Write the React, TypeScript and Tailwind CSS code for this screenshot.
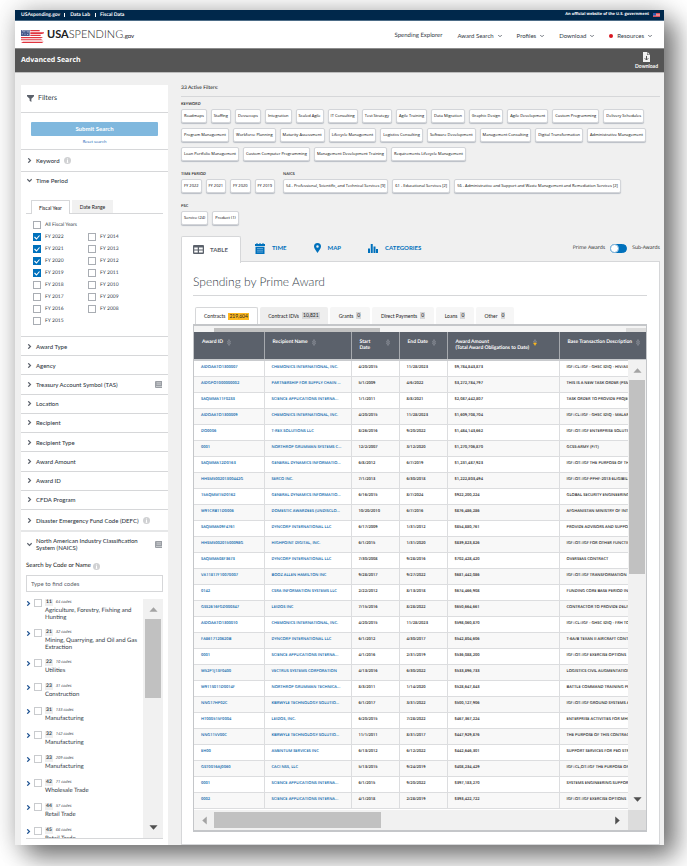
import React from "react";

const KEYWORD_ROWS = [
  ["Roadmaps", "Staffing", "Devsecops", "Integration", "Scaled Agile", "IT Consulting", "Test Strategy", "Agile Training", "Data Migration", "Graphic Design", "Agile Development", "Custom Programming", "Delivery Schedules"],
  ["Program Management", "Workforce Planning", "Maturity Assessment", "Lifecycle Management", "Logistics Consulting", "Software Development", "Management Consulting", "Digital Transformation", "Administrative Management"],
  ["Loan Portfolio Management", "Custom Computer Programming", "Management Development Training", "Requirements Lifecycle Management"],
];

const YEARS_LEFT = [2022, 2021, 2020, 2019, 2018, 2017, 2016, 2015];
const YEARS_RIGHT = [2014, 2013, 2012, 2011, 2010, 2009, 2008];

const SECTIONS = [
  { label: "Award Type" },
  { label: "Agency" },
  { label: "Treasury Account Symbol (TAS)", book: true },
  { label: "Location" },
  { label: "Recipient" },
  { label: "Recipient Type" },
  { label: "Award Amount" },
  { label: "Award ID" },
  { label: "CFDA Program" },
];

const NAICS = [
  { code: "11", count: 64, name: "Agriculture, Forestry, Fishing and Hunting", tall: true },
  { code: "21", count: 32, name: "Mining, Quarrying, and Oil and Gas Extraction", tall: true },
  { code: "22", count: 10, name: "Utilities" },
  { code: "23", count: 31, name: "Construction" },
  { code: "31", count: 133, name: "Manufacturing" },
  { code: "32", count: 142, name: "Manufacturing" },
  { code: "33", count: 209, name: "Manufacturing" },
  { code: "42", count: 71, name: "Wholesale Trade" },
  { code: "44", count: 57, name: "Retail Trade" },
  { code: "45", count: 66, name: "Retail Trade" },
];

const AWARD_TABS = [
  { label: "Contracts", count: "219,604", width: "w-[63px]" },
  { label: "Contract IDVs", count: "10,821", width: "w-[68px]" },
  { label: "Grants", count: "0", width: "w-[40px]" },
  { label: "Direct Payments", count: "0", width: "w-[62px]" },
  { label: "Loans", count: "0", width: "w-[38px]" },
  { label: "Other", count: "0", width: "w-[38px]" },
];

const ROWS = [
  ["AIDOAATO1300007", "CHEMONICS INTERNATIONAL, INC.", "4/20/2015", "11/28/2023", "$9,784,843,873", "IGF::CL::IGF - GHSC IDIQ - HIV/AIDS"],
  ["AIDGPO1000000002", "PARTNERSHIP FOR SUPPLY CHAIN ...", "5/1/2009", "4/6/2022", "$3,272,784,797", "THIS IS A NEW TASK ORDER (PSM)"],
  ["SAQMMA11F0233", "SCIENCE APPLICATIONS INTERNA...", "1/1/2011", "8/8/2021", "$2,087,442,807", "TASK ORDER TO PROVIDE PROJECT"],
  ["AIDOAATO1300009", "CHEMONICS INTERNATIONAL, INC.", "4/20/2015", "11/28/2023", "$1,609,708,704", "IGF::CL::IGF - GHSC IDIQ - MALARIA"],
  ["DO0006", "T-REX SOLUTIONS LLC", "8/26/2016", "9/20/2022", "$1,484,143,662", "IGF::OT::IGF ENTERPRISE SOLUTION"],
  ["0001", "NORTHROP GRUMMAN SYSTEMS C...", "12/2/2007", "3/12/2020", "$1,270,706,870", "GCSS-ARMY (P/T)"],
  ["SAQMMA12D0163", "GENERAL DYNAMICS INFORMATIO...", "6/8/2012", "6/7/2019", "$1,231,487,923", "IGF::OT::IGF THE PURPOSE OF THIS"],
  ["HHSM500201300442G", "SERCO INC.", "7/1/2013", "6/30/2018", "$1,222,803,494", "IGF::OT::IGF-PPHF-2013-ELIGIBILITY"],
  ["15AQMM15D0162", "GENERAL DYNAMICS INFORMATIO...", "6/16/2015", "8/7/2024", "$922,200,224", "GLOBAL SECURITY ENGINEERING"],
  ["W91CRB11D0006", "DOMESTIC AWARDEES (UNDISCLO...", "10/20/2010", "6/7/2016", "$876,486,286", "AFGHANISTAN MINISTRY OF INTERIOR"],
  ["SAQMMA09F4761", "DYNCORP INTERNATIONAL LLC", "6/17/2009", "1/31/2012", "$854,880,761", "PROVIDE ADVISORS AND SUPPORT"],
  ["HHSM500201500098G", "HIGHPOINT DIGITAL, INC.", "6/1/2015", "1/31/2020", "$839,823,826", "IGF::OT::IGF FOR OTHER FUNCTIONS"],
  ["SAQMMA08F3673", "DYNCORP INTERNATIONAL LLC", "7/30/2008", "9/28/2016", "$702,428,420", "OVERSEAS CONTRACT"],
  ["VA11817F10070007", "BOOZ ALLEN HAMILTON INC", "9/28/2017", "9/27/2022", "$681,442,086", "IGF::OT::IGF TRANSFORMATION"],
  ["0142", "CSRA INFORMATION SYSTEMS LLC", "2/22/2012", "8/13/2018", "$674,466,908", "FUNDING CORE BASE PERIOD INCR"],
  ["GSS2616FGD000347", "LEIDOS INC", "7/15/2016", "8/28/2022", "$650,664,661", "CONTRACTOR TO PROVIDE DELIVERY"],
  ["AIDOAATO1300010", "CHEMONICS INTERNATIONAL, INC.", "4/20/2015", "11/28/2023", "$598,060,870", "IGF::CL::IGF - GHSC IDIQ - FRH TO"],
  ["FA8617120620B", "DYNCORP INTERNATIONAL LLC", "6/1/2012", "4/30/2017", "$542,804,606", "T-6A/B TEXAN II AIRCRAFT CONTR"],
  ["0001", "SCIENCE APPLICATIONS INTERNA...", "4/1/2016", "2/31/2019", "$536,088,200", "IGF::OT::IGF EXERCISE OPTIONS"],
  ["W52P1J13F0400", "VECTRUS SYSTEMS CORPORATION", "4/13/2016", "6/30/2022", "$533,896,733", "LOGISTICS CIVIL AUGMENTATION"],
  ["W911S011D0014F", "NORTHROP GRUMMAN TECHNICA...", "8/3/2011", "1/14/2020", "$528,647,843", "BATTLE COMMAND TRAINING PROG"],
  ["NNG17HP02C", "KBRWYLE TECHNOLOGY SOLUTIO...", "6/1/2017", "3/31/2022", "$500,127,906", "IGF::OT::IGF GROUND SYSTEMS AND"],
  ["HT000515F0004", "LEIDOS, INC.", "6/20/2015", "7/28/2022", "$467,367,224", "ENTERPRISE ACTIVITIES FOR MHS"],
  ["NNG11VV00C", "KBRWYLE TECHNOLOGY SOLUTIO...", "11/1/2011", "8/31/2017", "$447,929,876", "THE PURPOSE OF THIS CONTRACT"],
  ["EH00", "AMENTUM SERVICES INC", "6/13/2012", "6/12/2022", "$442,646,301", "SUPPORT SERVICES FOR PEO STRI"],
  ["GST0016AJ0060", "CACI NSS, LLC", "5/13/2015", "9/24/2019", "$408,234,429", "IGF::CL,OT::IGF THE PURPOSE OF"],
  ["0001", "SCIENCE APPLICATIONS INTERNA...", "6/1/2015", "9/20/2022", "$397,183,270", "SYSTEMS ENGINEERING SUPPORT"],
  ["0002", "SCIENCE APPLICATIONS INTERNA...", "4/1/2018", "2/28/2019", "$393,422,722", "IGF::OT::IGF EXERCISE OPTIONS"],
];

const COLUMNS = ["Award ID", "Recipient Name", "Start Date", "End Date", "Award Amount (Total Award Obligations to Date)", "Base Transaction Description"];

function Chevron({ down = false, className = "h-[5px] w-[5px] text-[#5b616b]" }: { down?: boolean; className?: string }) {
  return (
    <svg viewBox="0 0 8 8" className={`shrink-0 ${className}`} fill="none" stroke="currentColor" strokeWidth="2" aria-hidden="true">
      {down ? <path d="M0.5 2l3.5 3.5L7.500 2" /> : <path d="M2 0.5L5.500 4L2 7.500" />}
    </svg>
  );
}

function Info() {
  return (
    <svg viewBox="0 0 14 14" className="h-[7px] w-[7px] shrink-0" aria-hidden="true">
      <circle cx="7" cy="7" r="7" fill="#d0d1d3" />
      <path d="M7 3v2M7 6v5M5.500 10.500h3" stroke="#fff" strokeWidth="2" />
    </svg>
  );
}

function Book() {
  return (
    <svg viewBox="0 0 14 14" className="h-[7px] w-[7px] shrink-0" aria-hidden="true">
      <path d="M2 0h12v14H2a2 2 0 01-2-2V2a2 2 0 012-2z" fill="#9a9ea4" />
      <path d="M3 3.500h9M3 6.500h9M2 11h12" stroke="#e4e5e7" strokeWidth="1.200" />
    </svg>
  );
}

function Check({ id, label, checked = false }: { id: string; label: string; checked?: boolean }) {
  return (
    <div className="flex h-3 items-center gap-1 text-[5px] leading-[6px] text-[#323a45]">
      <span className="grid h-2 w-2 shrink-0">
        <input id={id} type="checkbox" defaultChecked={checked} className="col-start-1 row-start-1 h-2 w-2 appearance-none border border-[#a9adb3] bg-white checked:border-[#0071bc] checked:bg-[#0071bc]" />
        {checked && (
          <svg viewBox="0 0 8 8" className="pointer-events-none col-start-1 row-start-1 h-2 w-2" fill="none" stroke="#fff" strokeWidth="1.100" aria-hidden="true">
            <path d="M1.500 4l2 2L6.500 2.500" />
          </svg>
        )}
      </span>
      <label htmlFor={id}>{label}</label>
    </div>
  );
}

function Chip({ children }: { children: React.ReactNode }) {
  return (
    <button className="h-[14px] whitespace-nowrap rounded-[2px] border border-[#d3d5d9] bg-white px-[2px] font-['Open_Sans',sans-serif] text-[4px] font-medium leading-[6px] text-black shadow-[0_1px_1px_#b8bdc5]">
      {children}
    </button>
  );
}

function SortIcon({ active = false }: { active?: boolean }) {
  return (
    <svg viewBox="0 0 8 14" className="h-[7px] w-1 shrink-0" aria-hidden="true">
      <path d="M4 1l3 5H1z" fill="none" stroke="#a2a7ae" />
      <path d="M4 13l3-5H1z" fill={active ? "#fdb81e" : "none"} stroke={active ? "#fdb81e" : "#a2a7ae"} />
    </svg>
  );
}

function Triangle({ path, color = "#505050" }: { path: string; color?: string }) {
  return (
    <svg viewBox="0 0 10 10" className="h-[9px] w-[9px] shrink-0" fill={color} aria-hidden="true">
      <path d={path} />
    </svg>
  );
}

const UP = "M5 2.500L9.500 7.500H0.500z";
const DOWN = "M5 7.500L9.500 2.500H0.500z";
const LEFT = "M2.500 5L7.500 0.500V9.500z";
const RIGHT = "M7.500 5L2.500 0.500V9.500z";

function FlagLogo() {
  return (
    <svg viewBox="0 0 69 39" className="h-[13px] w-[23px]" aria-hidden="true">
      <g fill="#e0353f">
        <path d="M28 0h28v4H28zM28 7h41v3l-6 2H28zM28 14h31v4H28zM0 21h66l-6 4H0zM0 28h60l6 3H0zM6 35h62l-5 4H0z" />
      </g>
      <path d="M0 0h26v18H0z" fill="#46598c" />
      <path d="M4 0v4M9 0v7M15 0v4M21 0v8M4 10v3M12 11v3M20 12v3" stroke="#fff" strokeWidth="2" />
    </svg>
  );
}

function TopBar() {
  return (
    <div className="flex h-[11px] items-center justify-between border-b border-[#4d6c87] bg-[#00284b] pl-[6px] pr-1 font-bold leading-[6px] text-white">
      <div className="flex items-center gap-1 text-[5px]">
        <a href="#home">USAspending.gov</a>
        <span className="h-1 w-px bg-white" />
        <a href="#lab" className="px-px">Data Lab</a>
        <span className="h-1 w-px bg-white" />
        <a href="#fiscal">Fiscal Data</a>
      </div>
      <div className="flex items-center gap-1">
        <span className="font-['Open_Sans',sans-serif] text-[4px]">An official website of the U.S. government</span>
        <svg viewBox="0 0 14 8" className="h-1 w-[7px]" aria-hidden="true">
          <path d="M0 0h14v8H0z" fill="#f1c8cb" />
          <path d="M0 1h14M0 4h14M0 7h14" stroke="#d8303b" strokeWidth="1.600" />
          <path d="M0 0h6v5H0z" fill="#2b58ad" />
        </svg>
      </div>
    </div>
  );
}

function Header() {
  return (
    <header className="flex h-[27px] items-center justify-between bg-white pl-[6px] pr-3 pt-[3px]">
      <a href="#home" className="flex items-center gap-[3px] text-[#212121]">
        <FlagLogo />
        <span className="text-[11px] leading-3">
          <b>USA</b>
          <span className="font-light">SPENDING</span>
          <span className="text-[6px]">.gov</span>
        </span>
      </a>
      <nav className="flex items-center gap-[15px] text-[6px] leading-[8px] text-[#323a45]">
        <a href="#explorer">Spending Explorer</a>
        {["Award Search", "Profiles", "Download", "Resources"].map((item) => (
          <button key={item} className="flex items-center gap-1">
            {item === "Resources" && <span className="h-1 w-1 rounded-full bg-[#d8151f]" />}
            {item}
            <Chevron down className="h-1 w-1 text-[#6f747c]" />
          </button>
        ))}
      </nav>
    </header>
  );
}

function TitleBar() {
  return (
    <div className="flex h-[25px] items-center justify-between border-b border-t border-b-[#bdbdbd] border-t-[#8c8c8c] bg-[#555555] pl-[6px] pr-[6px] text-white">
      <h1 className="font-['Open_Sans',sans-serif] text-[7px] font-bold leading-[10px]">Advanced Search</h1>
      <button className="flex flex-col items-center gap-px text-[5px] font-bold leading-[7px]">
        <svg viewBox="0 0 14 20" className="h-[10px] w-[7px]" aria-hidden="true">
          <path d="M0 0h8v6h6v14H0z" fill="#f1f1f1" />
          <path d="M9 0l5 5H9z" fill="#f1f1f1" />
          <path d="M7 8v8M3.500 12.500L7 16l3.500-3.500" fill="none" stroke="#555" strokeWidth="2" />
        </svg>
        Download
      </button>
    </div>
  );
}

function Sidebar() {
  const head = "flex items-center gap-1 text-[6px] leading-[7px] font-medium text-[#323a45]";
  return (
    <aside className="mt-3 w-[147px] shrink-0 bg-white">
      <div className="flex h-7 items-center gap-1 border-b border-[#d6d7d9] px-[6px] text-[#323a45]">
        <svg viewBox="0 0 12 12" className="h-[7px] w-[7px]" fill="#5b616b" aria-hidden="true">
          <path d="M0 0h12v2L7.500 6.500V12l-3-2V6.500L0 2z" />
        </svg>
        <h2 className="text-[7px] leading-[9px]">Filters</h2>
      </div>
      <div className="flex h-[37px] flex-col items-center gap-[3px] border-b border-[#d6d7d9] px-[10px] pt-[9px]">
        <button className="h-[14px] w-full shrink-0 rounded-[1px] bg-[#80b8de] text-[6px] font-bold leading-[8px] text-white">Submit Search</button>
        <button className="font-['Open_Sans',sans-serif] text-[4px] leading-[6px] text-[#0055b0]">Reset search</button>
      </div>
      <button className={`${head} h-[22px] w-full border-b border-[#d6d7d9] px-[6px]`}>
        <Chevron />Keyword<Info />
      </button>
      <section className="h-[165px] border-b border-[#d6d7d9] px-[5px] pt-[5px]">
        <button className={`${head} px-px`}>
          <Chevron down />Time Period
        </button>
        <div className="mt-[15px] flex h-[15px] items-end gap-[2px] border-b border-[#d6d7d9] px-[5px] text-[5px] leading-[6px] text-[#212121]">
          <button className="-mb-px h-[14px] w-[39px] rounded-t-[1px] border border-b-0 border-[#d6d7d9] bg-white">Fiscal Year</button>
          <button className="h-[13px] w-[41px] bg-[#f1f1f1]">Date Range</button>
        </div>
        <div className="mt-[5px] px-[7px]">
          <Check id="all-years" label="All Fiscal Years" />
          <div className="grid grid-cols-[55px_1fr]">
            <div>
              {YEARS_LEFT.map((y) => <Check key={y} id={`fy-${y}`} label={`FY ${y}`} checked={y >= 2019} />)}
            </div>
            <div>
              {YEARS_RIGHT.map((y) => <Check key={y} id={`fy-${y}`} label={`FY ${y}`} />)}
            </div>
          </div>
        </div>
      </section>
      <div className="grid h-[173px] grid-rows-9">
        {SECTIONS.map((s) => (
          <button key={s.label} className={`${head} w-full border-b border-[#d6d7d9] px-[6px]`}>
            <Chevron />
            <span className="flex-1 text-left">{s.label}</span>
            {s.book && <Book />}
          </button>
        ))}
      </div>
      <button className={`${head} h-[22px] w-full border-b-2 border-[#e6e7e8] px-[6px]`}>
        <Chevron />Disaster Emergency Fund Code (DEFC)<Info />
      </button>
      <button className={`${head} h-6 w-full px-[6px]`}>
        <Chevron down />
        <span className="flex-1 text-left">North American Industry Classification System (NAICS)</span>
        <Book />
      </button>
      <div className="px-[5px] pt-[6px]">
        <label htmlFor="naics" className="flex items-center gap-[2px] text-[6px] leading-[8px] text-[#212121]">
          Search by Code or Name <Info />
        </label>
        <input id="naics" type="text" placeholder="Type to find codes" className="mt-[5px] block h-[17px] w-full border border-[#d6d7d9] px-1 text-[6px] leading-[8px] text-[#323a45] placeholder:text-[#5b616b]" />
        <div className="mt-[7px] flex h-[240px] overflow-hidden border-b border-[#d6d7d9]">
          <ul className="flex-1">
            {NAICS.map((n) => (
              <li key={n.code} className={`flex gap-[3px] ${n.tall ? "h-[30px]" : "h-6"}`}>
                <button aria-label={`Expand ${n.code}`} className="flex h-2 w-[5px] shrink-0 items-center">
                  <Chevron className="h-[5px] w-[5px] text-[#205493]" />
                </button>
                <input type="checkbox" aria-label={`${n.code} ${n.name}`} className="h-2 w-2 shrink-0 appearance-none border border-[#c9cbce] bg-white" />
                <div className="w-24 text-[6px] leading-[7px] text-[#323a45]">
                  <div className="mb-px flex items-center gap-[3px] text-[5px] leading-[7px]">
                    <b className="bg-[#eeeeee] px-px">{n.code}</b>
                    <i className="font-['Open_Sans',sans-serif] text-[4px] font-medium">{n.count} codes</i>
                  </div>
                  {n.name}
                </div>
              </li>
            ))}
          </ul>
          <div className="flex w-5 shrink-0 flex-col items-center bg-[#f1f1f1] pb-[6px] pt-[6px]">
            <Triangle path={UP} color="#a3a3a3" />
            <div className="mt-[5px] h-[79px] w-4 bg-[#c1c1c1]" />
            <div className="flex-1" />
            <Triangle path={DOWN} />
          </div>
        </div>
      </div>
    </aside>
  );
}

function ActiveFilters() {
  const label = "mb-px font-['Open_Sans',sans-serif] text-[4px] font-semibold uppercase leading-[6px] text-[#212121]";
  return (
    <section className="text-[#212121]">
      <h2 className="border-b border-[#d6d7d9] pb-1 text-[5px] font-medium leading-[8px]">33 Active Filters:</h2>
      <h3 className={`${label} mt-[5px]`}>Keyword</h3>
      <div className="flex flex-col gap-[5px]">
        {KEYWORD_ROWS.map((row) => (
          <div key={row[0]} className="flex gap-1">
            {row.map((k) => <Chip key={k}>{k}</Chip>)}
          </div>
        ))}
      </div>
      <div className="mt-[11px] flex gap-2">
        <div>
          <h3 className={label}>Time Period</h3>
          <div className="flex gap-1">
            {["FY 2022", "FY 2021", "FY 2020", "FY 2019"].map((k) => <Chip key={k}>{k}</Chip>)}
          </div>
        </div>
        <div>
          <h3 className={label}>NAICS</h3>
          <div className="flex gap-1">
            <Chip>54 - Professional, Scientific, and Technical Services [9]</Chip>
            <Chip>61 - Educational Services [2]</Chip>
            <Chip>56 - Administrative and Support and Waste Management and Remediation Services [2]</Chip>
          </div>
        </div>
      </div>
      <h3 className={`${label} mt-[11px]`}>PSC</h3>
      <div className="flex gap-1">
        <Chip>Service (24)</Chip>
        <Chip>Product (1)</Chip>
      </div>
    </section>
  );
}

function ViewTabs() {
  const tab = "flex items-center gap-[7px] text-[6px] font-bold leading-[8px] text-[#0071bc]";
  return (
    <div className="mt-[10px] flex h-[26px] items-center">
      <button className="relative top-px flex h-[27px] w-[60px] shrink-0 items-center gap-[6px] rounded-t-[2px] border border-b-0 border-[#d6d7d9] bg-white pl-[11px] text-[6px] font-bold leading-[8px] text-[#5b616b]">
        <svg viewBox="0 0 22 18" className="h-[9px] w-[11px]" aria-hidden="true">
          <rect width="22" height="18" rx="2" fill="#5b616b" />
          <path d="M2.500 5h7v4h-7zM12 5h7.500v4H12zM2.500 11h7v4h-7zM12 11h7.500v4H12z" fill="#fff" />
        </svg>
        TABLE
      </button>
      <div className="ml-[14px] flex items-center gap-[27px]">
        <button className={tab}>
          <svg viewBox="0 0 20 22" className="h-[11px] w-[10px]" fill="#0071bc" aria-hidden="true">
            <path d="M0 2h3V0h2v2h4V0h2v2h4V0h2v2h3v4H0zM1 7.500h18V22H1z" />
            <path d="M4 11h12M4 14.500h12M4 18h12" stroke="#9cc5e4" strokeWidth="1.200" />
          </svg>
          TIME
        </button>
        <button className={tab}>
          <svg viewBox="0 0 14 20" className="h-[10px] w-[7px]" fill="#0071bc" aria-hidden="true">
            <path fillRule="evenodd" d="M7 0a7 7 0 017 7c0 4-4 8-7 13C4 15 0 11 0 7a7 7 0 017-7zm0 4.500a2.500 2.500 0 100 5 2.500 2.500 0 000-5z" />
          </svg>
          MAP
        </button>
        <button className={tab}>
          <svg viewBox="0 0 20 18" className="h-[9px] w-[10px]" fill="#0071bc" aria-hidden="true">
            <path d="M0 9h4v9H0zM5.500 0h4v18h-4zM11 5h4v13h-4zM16 10h4v8h-4z" />
          </svg>
          CATEGORIES
        </button>
      </div>
      <label className="ml-auto flex items-center gap-[5px] font-['Open_Sans',sans-serif] text-[5px] leading-[6px] text-[#212121]">
        Prime Awards
        <span className="grid items-center">
          <input type="checkbox" role="switch" aria-label="Prime Awards or Sub-Awards" className="col-start-1 row-start-1 h-[9px] w-[17px] appearance-none rounded-full border border-[#0071bc] bg-[#0071bc]" />
          <span className="pointer-events-none col-start-1 row-start-1 h-[9px] w-[9px] rounded-full border border-[#8bb9dc] bg-white" />
        </span>
        Sub-Awards
      </label>
    </div>
  );
}

function AwardTable() {
  return (
    <div className="border border-b-2 border-t-2 border-[#c4c6c9]">
      <div className="flex h-[6px] items-end justify-between bg-[#f4f4f4] pl-5">
        <div className="h-1 w-[166px] bg-[#c1c1c1]" />
        <div className="h-1 w-5 bg-[#dcdcdc]" />
      </div>
      <div className="relative h-[478px] overflow-hidden">
        <table className="w-full table-fixed border-collapse text-left">
          <colgroup>
            <col className="w-[70px]" />
            <col className="w-[87px]" />
            <col className="w-[48px]" />
            <col className="w-[48px]" />
            <col className="w-[112px]" />
            <col />
          </colgroup>
          <thead>
            <tr className="h-7 border-b-2 border-[#c9cbce] bg-[#5b616b]">
              {COLUMNS.map((c, i) => (
                <th key={c} scope="col" className="overflow-hidden border-r border-[#a6a9ae] pb-0 pl-2 pr-0 pt-[7px] align-top text-[5px] font-bold leading-[6px] text-white last:border-r-0">
                  <span className="flex items-start gap-1">
                    <span className={i === 2 ? "w-[22px]" : "whitespace-nowrap"}>
                      {i === 4 ? <>Award Amount<br />(Total Award Obligations to Date)</> : c}
                    </span>
                    <SortIcon active={i === 4} />
                  </span>
                </th>
              ))}
            </tr>
          </thead>
          <tbody>
            {ROWS.map((row, r) => (
              <tr key={r} className="h-4 border-b border-[#dcdddf] bg-white even:bg-[#f8f8f8]">
                {row.map((cell, i) => (
                  <td key={i} className="overflow-hidden whitespace-nowrap border-r border-[#dcdddf] py-0 pl-[7px] pr-0 font-['Open_Sans',sans-serif] text-[4px] font-semibold leading-[6px] text-[#212121] last:border-r-0">
                    {i < 2 ? <a href="#award" className="text-[#005ea8]">{cell}</a> : cell}
                  </td>
                ))}
              </tr>
            ))}
          </tbody>
        </table>
        <div className="absolute bottom-0 right-0 top-[28px] flex w-[18px] flex-col items-center bg-[#f1f1f1] py-[6px]">
          <Triangle path={UP} color="#a3a3a3" />
          <div className="mt-[5px] h-[194px] w-4 bg-[#c1c1c1]" />
          <div className="flex-1" />
          <Triangle path={DOWN} />
        </div>
      </div>
      <div className="flex h-5 items-center bg-[#f1f1f1] pl-[6px]">
        <Triangle path={LEFT} color="#a3a3a3" />
        <div className="ml-[5px] h-4 w-[167px] bg-[#c1c1c1]" />
        <div className="flex-1" />
        <Triangle path={RIGHT} />
        <div className="ml-[6px] h-5 w-[18px] bg-[#dcdcdc]" />
      </div>
    </div>
  );
}

function Results() {
  return (
    <section className="flex-1 border border-[#d6d7d9] bg-white pb-3 pl-[11px] pr-3 pt-3">
      <h2 className="border-b border-[#d6d7d9] pb-[5px] text-[12px] font-light leading-4 text-[#323a45]">Spending by Prime Award</h2>
      <div className="mt-[11px] flex h-[17px] items-end gap-[2px] px-[2px] text-[5px] leading-[6px] text-[#212121]">
        {AWARD_TABS.map((t, i) => (
          <button key={t.label} className={`flex h-[17px] items-center justify-center gap-[3px] whitespace-nowrap rounded-t-[2px] ${t.width} ${i === 0 ? "border border-b-0 border-[#d6d7d9] bg-white" : i === 1 ? "bg-[#eeeeee]" : "bg-[#f6f6f6]"}`}>
            {t.label}
            <span className={`px-px text-[5px] leading-[7px] ${i === 0 ? "bg-[#fdb81e]" : "bg-[#d6d7d9]"}`}>{t.count}</span>
          </button>
        ))}
      </div>
      <AwardTable />
    </section>
  );
}

export default function App() {
  return (
    <div className="min-h-screen overflow-hidden bg-white pb-[21px] pl-[15px] pr-[23px] pt-[10px] font-['Lato','Open_Sans',sans-serif] [text-rendering:geometricPrecision]">
      <div className="bg-[#f0f0f0] shadow-[12px_12px_24px_rgba(0,0,0,0.5),0_0_24px_rgba(0,0,0,0.2)]">
        <TopBar />
        <Header />
        <TitleBar />
        <div className="flex gap-[13px] pl-[6px] pr-1">
          <Sidebar />
          <main className="flex min-w-0 flex-1 flex-col pt-[11px]">
            <ActiveFilters />
            <ViewTabs />
            <Results />
          </main>
        </div>
      </div>
    </div>
  );
}
